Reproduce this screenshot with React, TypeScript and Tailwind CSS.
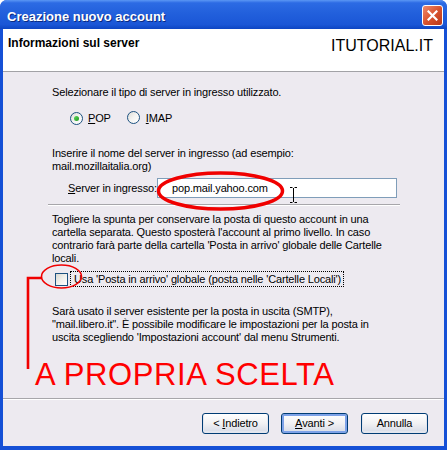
import React from "react";

const U = ({ children }: { children: React.ReactNode }) => (
  <span className="underline underline-offset-[1px]">{children}</span>
);

function Radio({ checked }: { checked?: boolean }) {
  return (
    <span className="relative inline-flex w-[13px] h-[13px] rounded-full border border-[#1C5180] bg-gradient-to-br from-[#DCDCD7] via-[#F4F4F2] to-white items-center justify-center shrink-0">
      {checked && (
        <span className="w-[5px] h-[5px] rounded-full bg-gradient-to-br from-[#5ED65E] to-[#1B9A1B]" />
      )}
    </span>
  );
}

function Button({
  children,
  def,
}: {
  children: React.ReactNode;
  def?: boolean;
}) {
  return (
    <div
      className={
        "w-[67px] h-[21px] rounded-[3px] border border-[#003C74] bg-gradient-to-b from-white via-[#F1F1F3] to-[#D5DAE6] flex items-center justify-center text-[11px] leading-[13px] tracking-[-0.15px] text-black whitespace-pre " +
        (def ? "shadow-[inset_0_0_0_2px_#7DA2E8]" : "shadow-[inset_0_-1px_0_1px_#E3E6EE]")
      }
    >
      {children}
    </div>
  );
}

export default function App() {
  return (
    <div className="relative w-[447px] h-[450px] bg-white font-['Liberation_Sans',Arial,sans-serif] text-black overflow-hidden">
      <div className="flex flex-col w-full h-full rounded-t-[7px] overflow-hidden bg-[#1550D6]">
        {/* Title bar */}
        <div className="h-[29px] shrink-0 flex items-start justify-between bg-[linear-gradient(to_bottom,#5B97F4_0%,#2C6BE4_10%,#2260DC_45%,#1A56D6_85%,#0D45C2_100%)]">
          <span className="ml-[7px] mt-[9px] text-[13px] leading-[16px] font-bold text-white [text-shadow:1px_1px_0_#0A2A80]">
            Creazione nuovo account
          </span>
          <div className="mt-[5px] mr-[4px] w-[21px] h-[21px] rounded-[3px] border border-white bg-gradient-to-br from-[#EE8A6C] via-[#D9532E] to-[#B8381A] flex items-center justify-center">
            <svg width="11" height="11" viewBox="0 0 11 11">
              <path d="M1.5 1.5 L9.5 9.5 M9.5 1.5 L1.5 9.5" stroke="white" strokeWidth="2.2" strokeLinecap="square" />
            </svg>
          </div>
        </div>

        {/* Body */}
        <div className="flex-1 mx-[3px] mb-[4px] flex flex-col bg-[#EDEAF0]">
          {/* Header */}
          <div className="h-[43px] shrink-0 bg-white border-b border-[#A2A2A6] flex justify-between">
            <span className="ml-[5px] mt-[7px] text-[12px] leading-[14px] font-bold">
              Informazioni sul server
            </span>
            <span className="mr-[11px] mt-[9px] text-[16px] leading-[16px]">
              ITUTORIAL.IT
            </span>
          </div>

          {/* Content */}
          <div className="flex-1 flex flex-col pl-[49px] text-[11px] leading-[13px] tracking-[-0.15px]">
            <div className="mt-[14px] whitespace-nowrap">
              Selezionare il tipo di server in ingresso utilizzato.
            </div>
            <div className="mt-[13px] h-[13px] flex items-center ml-[18px]">
              <Radio checked />
              <span className="ml-[5px]">
                <U>P</U>OP
              </span>
              <span className="ml-[16px]">
                <Radio />
              </span>
              <span className="ml-[6px]">
                <U>I</U>MAP
              </span>
            </div>
            <div className="mt-[22px] whitespace-nowrap">
              <div>Inserire il nome del server in ingresso (ad esempio:</div>
              <div>mail.mozillaitalia.org)</div>
            </div>
            <div className="mt-[5px] ml-[16px] flex items-center h-[20px]">
              <span className="w-[89px] whitespace-nowrap">
                <U>S</U>erver in ingresso:
              </span>
              <div className="w-[240px] h-[20px] border border-[#7F9DB9] bg-white flex items-center pl-[14px]">
                pop.mail.yahoo.com
              </div>
            </div>
            <div className="mt-[6px] -ml-[4px] w-[352px] h-[2px] border-t border-[#A7A6AA] border-b border-b-white" />
            <div className="mt-[7px] whitespace-nowrap">
              <div>Togliere la spunta per conservare la posta di questo account in una</div>
              <div>cartella separata. Questo sposterà l'account al primo livello. In caso</div>
              <div>contrario farà parte della cartella 'Posta in arrivo' globale delle Cartelle</div>
              <div>locali.</div>
            </div>
            <div className="mt-[6px] flex items-start ml-[3px]">
              <span className="mt-[2px] w-[13px] h-[13px] border border-[#1C5180] bg-gradient-to-br from-[#D8D8D2] via-[#F0F0EC] to-white shrink-0" />
              <span className="ml-[2px] border border-dotted border-black pl-[3px] pr-[2px] leading-[14px] whitespace-nowrap">
                Usa 'Posta in arrivo' globale (posta nelle 'Cartelle Locali')
              </span>
            </div>
            <div className="mt-[18px] whitespace-nowrap">
              <div>Sarà usato il server esistente per la posta in uscita (SMTP),</div>
              <div>"mail.libero.it". È possibile modificare le impostazioni per la posta in</div>
              <div>uscita scegliendo 'Impostazioni account' dal menu Strumenti.</div>
            </div>
            <div className="mt-[15px] -ml-[17px] text-[31px] leading-[31px] tracking-[0.6px] text-[#FF0000] whitespace-nowrap">
              A PROPRIA SCELTA
            </div>
          </div>

          {/* Footer */}
          <div className="h-[48px] shrink-0 flex flex-col">
            <div className="h-[2px] border-t border-[#A7A6AA] border-b border-b-white" />
            <div className="mt-[13px] flex justify-end pr-[16px]">
              <Button>
                {"< "}
                <U>I</U>
                {"ndietro"}
              </Button>
              <div className="ml-[12px]">
                <Button def>
                  <U>A</U>
                  {"vanti >"}
                </Button>
              </div>
              <div className="ml-[13px]">
                <Button>Annulla</Button>
              </div>
            </div>
          </div>
        </div>
      </div>

      {/* Overlay annotations */}
      <svg
        className="absolute left-0 top-0 pointer-events-none"
        width="447"
        height="450"
        viewBox="0 0 447 450"
      >
        <ellipse cx="220.5" cy="191" rx="62" ry="18" fill="none" stroke="#F00000" strokeWidth="3.5" />
        <ellipse cx="61.5" cy="276.5" rx="20" ry="11.5" fill="none" stroke="#F00000" strokeWidth="1.6" />
        <path d="M42 278 H28 V369" fill="none" stroke="#F00000" strokeWidth="2.6" />
        <path
          d="M290 187.5 H292.5 M294.5 187.5 H297 M293.5 188 V202 M290 202.5 H292.5 M294.5 202.5 H297"
          stroke="#000"
          strokeWidth="1"
          fill="none"
        />
      </svg>
    </div>
  );
}
